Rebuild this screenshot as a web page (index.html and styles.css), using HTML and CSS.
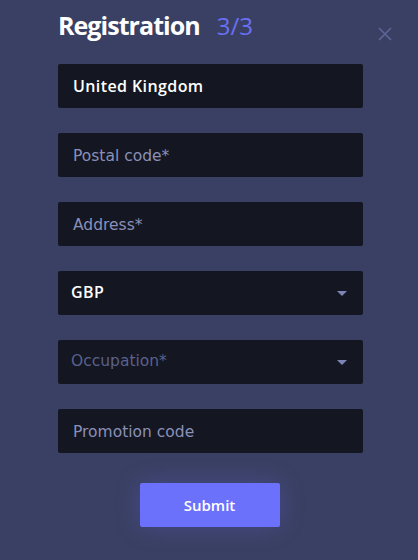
FILE: index.html
```html
<!DOCTYPE html>
<html>
<head>
<meta charset="utf-8">
<link rel="stylesheet" href="styles.css">
</head>
<body>
<div class="modal">
  <div class="header">
    <h1 class="title">Registration<span class="step">3/3</span></h1>
    <button class="close" aria-label="Close">
      <svg width="14" height="14" viewBox="0 0 14 14"><path d="M1 1L13 13M13 1L1 13" stroke="#5d6596" stroke-width="1.6" fill="none"/></svg>
    </button>
  </div>
  <form class="form">
    <div class="field"><span class="value">United Kingdom</span></div>
    <div class="field"><span class="ph">Postal code*</span></div>
    <div class="field"><span class="ph">Address*</span></div>
    <div class="field select"><span class="value sel">GBP</span><span class="caret"></span></div>
    <div class="field select"><span class="ph dim">Occupation*</span><span class="caret"></span></div>
    <div class="field"><span class="ph">Promotion code</span></div>
    <div class="actions"><button type="button" class="submit">Submit</button></div>
  </form>
</div>
</body>
</html>
```
FILE: styles.css
```css
* { box-sizing: border-box; }
html, body { margin: 0; padding: 0; }
body {
  width: 418px;
  height: 560px;
  background: #3a4063;
  font-family: "Open Sans", "Noto Sans", sans-serif;
  overflow: hidden;
}
.modal {
  padding: 0 55px 0 58px;
}
.header {
  height: 64px;
  display: flex;
  align-items: flex-start;
  position: relative;
}
.title {
  margin: 10px 0 0 0;
  font-size: 25px;
  font-weight: 700;
  color: #ffffff;
  letter-spacing: -0.95px;
  line-height: 30px;
}
.step {
  color: #6a6ff3;
  font-weight: 400;
  margin-left: 17px;
  font-size: 24px;
  letter-spacing: 0;
}
.close {
  position: absolute;
  right: -29px;
  top: 27px;
  background: none;
  border: 0;
  padding: 0;
  width: 14px;
  height: 14px;
  display: block;
}
.close svg { display: block; }
.form {
  display: flex;
  flex-direction: column;
  gap: 25px;
}
.field {
  height: 44px;
  background: #141621;
  border-radius: 2px;
  display: flex;
  align-items: center;
  padding: 0 15px;
}
.value {
  color: #ffffff;
  font-weight: 600;
  font-size: 16px;
  letter-spacing: 0.4px;
}
.value.sel { margin-left: -2px; margin-top: -2px; }
.ph {
  color: #8990b8;
  font-family: "DejaVu Sans", "Open Sans", sans-serif;
  font-size: 15.5px;
  margin-top: 1px;
}
.ph.dim { color: #59618c; margin-left: -2px; margin-top: -2px; }
.select { justify-content: space-between; }
.caret {
  width: 0;
  height: 0;
  border-left: 5px solid transparent;
  border-right: 5px solid transparent;
  border-top: 5px solid #7c85b5;
  margin-right: 1px;
}
.actions {
  display: flex;
  justify-content: center;
  padding-top: 5px;
}
.submit {
  width: 140px;
  height: 44px;
  margin-left: -2px;
  background: #6c71fb;
  border: 0;
  border-radius: 2px;
  color: #ffffff;
  font-family: "Open Sans", "Noto Sans", sans-serif;
  font-size: 15px;
  font-weight: 600;
  box-shadow: 0 0 24px rgba(108, 113, 251, 0.25);
}
```
